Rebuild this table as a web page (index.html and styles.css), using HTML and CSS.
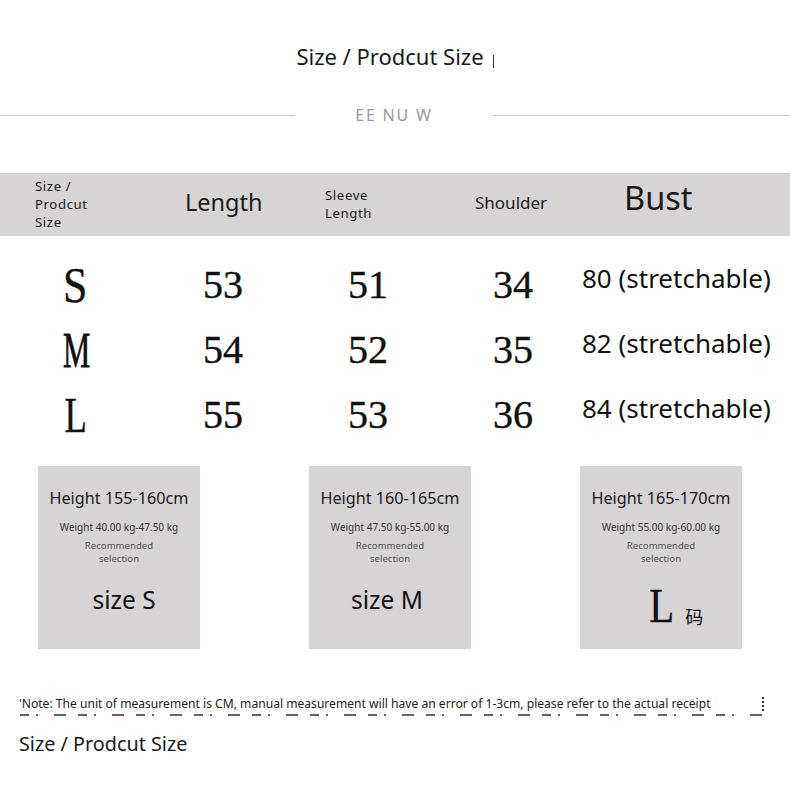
FILE: index.html
```html
<!DOCTYPE html>
<html>
<head>
<meta charset="utf-8">
<link rel="stylesheet" href="styles.css">
</head>
<body>
<div class="page">
  <div class="title-row">
    <h1 class="title">Size / Prodcut Size</h1><span class="title-mark"></span>
  </div>
  <div class="divider">
    <span class="rule rule-left"></span>
    <span class="divider-text">EE NU W</span>
    <span class="rule rule-right"></span>
  </div>

  <div class="thead">
    <div class="th th-size">Size /<br>Prodcut<br>Size</div>
    <div class="th th-length">Length</div>
    <div class="th th-sleeve">Sleeve<br>Length</div>
    <div class="th th-shoulder">Shoulder</div>
    <div class="th th-bust">Bust</div>
  </div>

  <div class="rows">
    <div class="row">
      <div class="cell c-size"><span class="letter letter-s">S</span></div>
      <div class="cell c-len">53</div>
      <div class="cell c-sleeve">51</div>
      <div class="cell c-shoulder">34</div>
      <div class="cell c-bust">80 (stretchable)</div>
    </div>
    <div class="row">
      <div class="cell c-size"><span class="letter letter-m">M</span></div>
      <div class="cell c-len">54</div>
      <div class="cell c-sleeve">52</div>
      <div class="cell c-shoulder">35</div>
      <div class="cell c-bust">82 (stretchable)</div>
    </div>
    <div class="row">
      <div class="cell c-size"><span class="letter letter-l">L</span></div>
      <div class="cell c-len">55</div>
      <div class="cell c-sleeve">53</div>
      <div class="cell c-shoulder">36</div>
      <div class="cell c-bust">84 (stretchable)</div>
    </div>
  </div>

  <div class="cards">
    <div class="card">
      <div class="card-height">Height 155-160cm</div>
      <div class="card-weight">Weight 40.00 kg-47.50 kg</div>
      <div class="card-rec">Recommended<br>selection</div>
      <div class="card-size card-size-s">size S</div>
    </div>
    <div class="card">
      <div class="card-height">Height 160-165cm</div>
      <div class="card-weight">Weight 47.50 kg-55.00 kg</div>
      <div class="card-rec">Recommended<br>selection</div>
      <div class="card-size card-size-m">size M</div>
    </div>
    <div class="card">
      <div class="card-height">Height 165-170cm</div>
      <div class="card-weight">Weight 55.00 kg-60.00 kg</div>
      <div class="card-rec">Recommended<br>selection</div>
      <div class="card-size card-size-l"><span class="big-l">L</span><span class="ma">码</span></div>
    </div>
  </div>

  <div class="note-row">
    <p class="note">'Note: The unit of measurement is CM, manual measurement will have an error of 1-3cm, please refer to the actual receipt</p>
    <span class="note-mark"></span>
  </div>
  <div class="note-cut"></div>
  <h2 class="bottom-title">Size / Prodcut Size</h2>
</div>
</body>
</html>
```

FILE: styles.css
```css
* { box-sizing: border-box; }
html, body { margin: 0; padding: 0; background: #fff; }
body { font-family: "Noto Sans", "Open Sans", sans-serif; color: #111; }
.page { width: 790px; height: 808px; overflow: hidden; }

.title-row {
  display: flex;
  justify-content: center;
  align-items: flex-start;
  padding-top: 41px;
}
.title {
  margin: 0;
  font-size: 22px;
  font-weight: 400;
  line-height: 30px;
  color: #1a1a1a;
}
.title-mark {
  width: 1px;
  height: 13px;
  background: #333;
  margin-left: 9px;
  margin-top: 14px;
}

.divider {
  display: flex;
  align-items: center;
  margin-top: 29px;
  height: 30px;
}
.rule { height: 1px; background: #c8c8c8; }
.rule-left { width: 295px; }
.rule-right { flex: 1; }
.divider-text {
  width: 198px;
  text-align: center;
  font-size: 16px;
  letter-spacing: 1.8px;
  color: #9a9a9a;
}

.thead {
  margin-top: 43px;
  height: 63px;
  background: #d6d4d5;
  display: grid;
  grid-template-columns: 150px 140px 150px 149px 1fr;
  align-items: center;
}
.th { padding-left: 35px; color: #1a1a1a; }
.th-size { font-size: 13.2px; line-height: 18px; letter-spacing: 0.6px; padding-bottom: 2px; }
.th-length { font-size: 23.5px; line-height: 30px; padding-bottom: 6px; }
.th-sleeve { font-size: 13.2px; line-height: 18px; letter-spacing: 0.6px; padding-bottom: 2px; }
.th-shoulder { font-size: 17px; line-height: 22px; padding-bottom: 4px; }
.th-bust { font-size: 32.5px; line-height: 40px; padding-bottom: 14px; }

.rows { padding-top: 16px; }
.row {
  display: grid;
  grid-template-columns: 150px 140px 150px 142px 1fr;
  height: 65px;
  align-items: center;
}
.cell {
  font-family: "Liberation Serif", "DejaVu Serif", serif;
  font-size: 40px;
  line-height: 40px;
  color: #111;
  -webkit-text-stroke: 0.4px #111;
}
.c-size { padding-left: 63px; }
.letter {
  display: inline-block;
  font-size: 51px;
  line-height: 50px;
  transform-origin: left center;
}
.letter-s { transform: scaleX(0.86); }
.letter-m { transform: scaleX(0.6); -webkit-text-stroke: 0.8px #111; }
.letter-l { transform: scaleX(0.72); padding-left: 2px; }
.c-len { padding-left: 53px; }
.c-sleeve { padding-left: 58px; }
.c-shoulder { padding-left: 53px; }
.c-bust {
  font-family: "Noto Sans", "Open Sans", sans-serif;
  font-size: 26px;
  line-height: 30px;
  -webkit-text-stroke: 0;
  white-space: nowrap;
  padding-bottom: 14px;
}

.cards {
  display: flex;
  gap: 109px;
  padding-left: 38px;
  margin-top: 19px;
}
.card {
  width: 162px;
  height: 183px;
  background: #d6d4d5;
  text-align: center;
  padding-top: 21px;
  display: flex;
  flex-direction: column;
  align-items: center;
}
.card-height { font-size: 16.2px; line-height: 22px; color: #1a1a1a; }
.card-weight { font-size: 10px; line-height: 14px; margin-top: 11px; color: #333; }
.card-rec { font-size: 9.6px; line-height: 13px; margin-top: 5px; color: #555; }
.card-size { font-size: 24.5px; line-height: 30px; margin-top: 20px; color: #111; }
.card-size-s { padding-left: 10px; }
.card-size-m { padding-right: 6px; }
.card-size-l { display: flex; align-items: flex-end; margin-top: 20px; padding-left: 28px; }
.big-l {
  font-family: "Liberation Serif", serif;
  font-size: 48px;
  line-height: 42px;
  display: inline-block;
  transform: scaleX(0.85);
  -webkit-text-stroke: 0.3px #111;
}
.ma {
  font-family: "Noto Sans CJK SC", sans-serif;
  font-size: 18px;
  line-height: 22px;
  margin-left: 9px;
}

.note-row {
  display: flex;
  align-items: center;
  margin-top: 46px;
  padding-left: 19px;
}
.note {
  margin: 0;
  font-size: 12.1px;
  line-height: 18px;
  color: #222;
  white-space: nowrap;
}
.note-mark {
  width: 0;
  height: 14px;
  border-left: 2px dotted #333;
  margin-left: 51px;
}
.note-cut {
  margin: 1px 0 0 20px;
  width: 745px;
  height: 2px;
  background: repeating-linear-gradient(90deg, #222 0 9px, transparent 9px 16px, #222 16px 18px, transparent 18px 34px, #222 34px 46px, transparent 46px 58px);
  opacity: 0.7;
}
.bottom-title {
  margin: 15px 0 0 19px;
  font-size: 19.8px;
  font-weight: 400;
  line-height: 26px;
  color: #1a1a1a;
}
```
